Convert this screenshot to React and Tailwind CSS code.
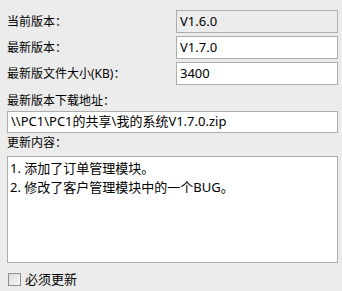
export default function App() {
    const font = { fontFamily: '"Noto Sans", "Noto Sans CJK SC", sans-serif' };

    return (
        <div className="w-[342px] h-[291px] bg-[#ececec] text-[12px] text-black overflow-hidden" style={font}>
            <div className="pt-[10px] pl-[7px] pr-[4px]">
                {/* version rows */}
                <div className="flex flex-col gap-[3px]">
                    <div className="flex items-center h-[23px]">
                        <div className="w-[169px] leading-none">当前版本：</div>
                        <div className="flex-1 h-full border border-[#adadad] bg-[#ececec] flex items-center pl-[3px] text-[13px]">V1.6.0</div>
                    </div>
                    <div className="flex items-center h-[23px]">
                        <div className="w-[169px] leading-none">最新版本：</div>
                        <div className="flex-1 h-full border border-[#adadad] bg-white flex items-center pl-[3px] text-[13px]">V1.7.0</div>
                    </div>
                    <div className="flex items-center h-[23px]">
                        <div className="w-[169px] leading-none">最新版文件大小(KB)：</div>
                        <div className="flex-1 h-full border border-[#adadad] bg-white flex items-center pl-[3px] text-[13px]">3400</div>
                    </div>
                </div>

                {/* download url */}
                <div className="mt-[8px] h-[16px] flex items-center leading-none">最新版本下载地址：</div>
                <div className="mt-[2px] h-[22px] border border-[#adadad] bg-white flex items-center pl-[3px] text-[13px] whitespace-nowrap overflow-hidden">
                    \\PC1\PC1的共享\我的系统V1.7.0.zip
                </div>

                {/* update notes */}
                <div className="mt-[2px] h-[16px] flex items-center leading-none">更新内容：</div>
                <div className="mt-[5px] h-[107px] border border-[#adadad] bg-white pl-[2px] pt-[2px] text-[13px] leading-[19px]">
                    <div>1. 添加了订单管理模块。</div>
                    <div>2. 修改了客户管理模块中的一个BUG。</div>
                </div>

                {/* checkbox */}
                <div className="mt-[10px] flex items-center gap-[4px] h-[13px]">
                    <div className="ml-[1px] w-[13px] h-[13px] border border-[#8e8f8f] bg-gradient-to-br from-[#dcdcdc] to-[#f6f6f6]"></div>
                    <span className="text-[13px] leading-none">必须更新</span>
                </div>
            </div>
        </div>
    );
}
